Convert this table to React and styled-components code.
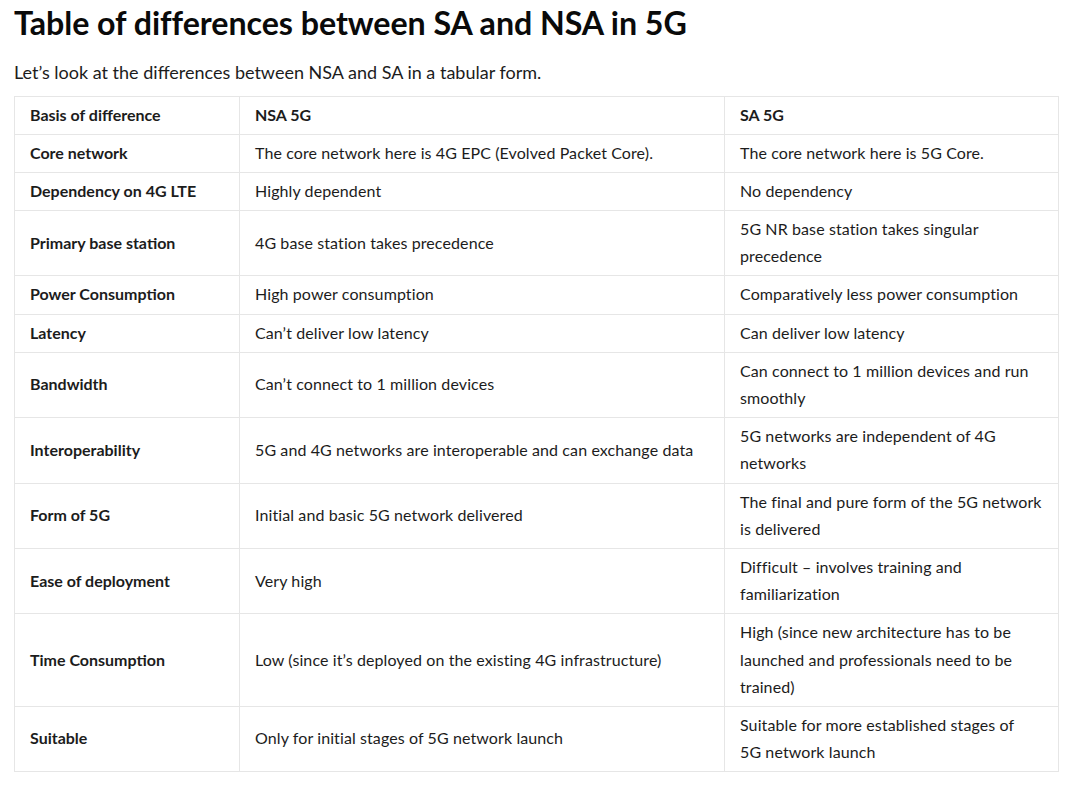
import React from "react";
import styled, { createGlobalStyle } from "styled-components";

const GlobalStyle = createGlobalStyle`
  html, body { margin: 0; padding: 0; background: #ffffff; }
  body { font-family: "Lato", "Noto Sans", sans-serif; color: #1c1c1c; }
`;

const Page = styled.main`
  padding: 3px 14px 0 14px;
  width: 1044px;
`;

const Title = styled.h1`
  margin: 0 0 16px 0;
  font-size: 32.2px;
  line-height: 40px;
  font-weight: 700;
  color: #0a0a0a;
  letter-spacing: -0.05px;
`;

const Intro = styled.p`
  margin: 0 0 9.5px 0;
  font-size: 18px;
  line-height: 27px;
  color: #1c1c1c;
`;

const Table = styled.table`
  width: 1044px;
  border-collapse: collapse;
  table-layout: fixed;
`;

const Cell = styled.td`
  border: 1px solid #e6e6e6;
  padding: 4px 15px 6px 15px;
  font-size: 16px;
  line-height: 1.7;
  vertical-align: middle;
  color: #1c1c1c;
  font-weight: ${(p) => (p.$bold ? 700 : 400)};
  letter-spacing: ${(p) => (p.$bold ? "0" : "0.1px")};
`;

const rows = [
  ["Core network", "The core network here is 4G EPC (Evolved Packet Core).", "The core network here is 5G Core."],
  ["Dependency on 4G LTE", "Highly dependent", "No dependency"],
  ["Primary base station", "4G base station takes precedence", "5G NR base station takes singular precedence"],
  ["Power Consumption", "High power consumption", "Comparatively less power consumption"],
  ["Latency", "Can’t deliver low latency", "Can deliver low latency"],
  ["Bandwidth", "Can’t connect to 1 million devices", "Can connect to 1 million devices and run smoothly"],
  ["Interoperability", "5G and 4G networks are interoperable and can exchange data", "5G networks are independent of 4G networks"],
  ["Form of 5G", "Initial and basic 5G network delivered", "The final and pure form of the 5G network is delivered"],
  ["Ease of deployment", "Very high", "Difficult – involves training and familiarization"],
  ["Time Consumption", "Low (since it’s deployed on the existing 4G infrastructure)", "High (since new architecture has to be launched and professionals need to be trained)"],
  ["Suitable", "Only for initial stages of 5G network launch", "Suitable for more established stages of 5G\u00a0network launch"],
];

export default function App() {
  return (
    <>
      <GlobalStyle />
      <Page>
        <Title>Table of differences between SA and NSA in 5G</Title>
        <Intro>Let’s look at the differences between NSA and SA in a tabular form.</Intro>
        <Table>
          <colgroup>
            <col style={{ width: 225 }} />
            <col style={{ width: 485 }} />
            <col style={{ width: 334 }} />
          </colgroup>
          <tbody>
            <tr>
              <Cell $bold>Basis of difference</Cell>
              <Cell $bold>NSA 5G</Cell>
              <Cell $bold>SA 5G</Cell>
            </tr>
            {rows.map((r) => (
              <tr key={r[0]}>
                <Cell $bold>{r[0]}</Cell>
                <Cell>{r[1]}</Cell>
                <Cell>{r[2]}</Cell>
              </tr>
            ))}
          </tbody>
        </Table>
      </Page>
    </>
  );
}
